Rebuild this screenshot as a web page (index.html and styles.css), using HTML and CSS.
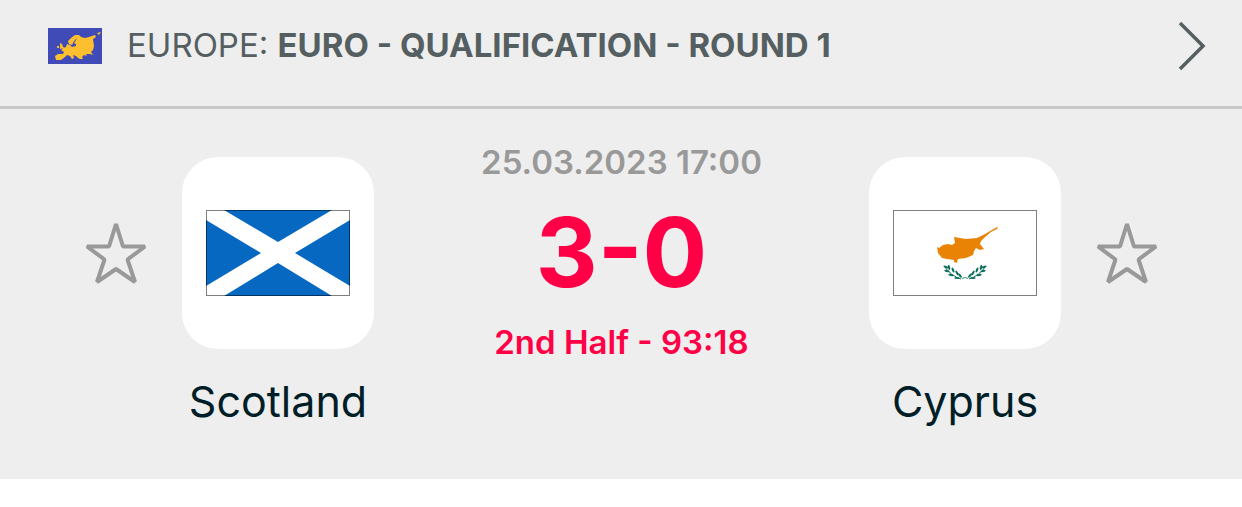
FILE: index.html
```html
<!DOCTYPE html>
<html lang="en">
<head>
<meta charset="utf-8">
<meta name="viewport" content="width=device-width, initial-scale=1">
<title>Scotland - Cyprus</title>
<link rel="stylesheet" href="styles.css">
</head>
<body>
<a class="league" href="#league">
  <svg class="league-flag" viewBox="0 0 54 36" aria-hidden="true">
    <rect width="54" height="36" fill="#414bb8"/>
    <path fill="#fdbf2d" d="M8 32 7 28 10 26 15 26 16 24 13 22 16 20 18 19 19 16 22 17 24 19 28 18 28 16 26 15 28 12 29 10 26 13 24 17 21 16 20 13 23 10 27 7 31 7 33 9 37 10 41 9 44 8 47 7 48 9 45 11 46 18 45 22 43 24 45 27 42 26 38 26 39 28 36 27 34 29 35 31 32 31 30 30 28 28 25 27 26 30 24 31 22 28 19 27 17 29 13 32ZM12 15 14 16 15 19 17 20 12 21ZM9 18 11 18 11 20 9 20ZM49 5 53 4 51 7Z"/>
  </svg>
  <span class="league-name">EUROPE: <b>EURO - QUALIFICATION - ROUND 1</b></span>
  <svg class="chevron" viewBox="0 0 28 50" aria-hidden="true">
    <path d="M2 2 25 25 2 48" fill="none" stroke="#555e61" stroke-width="3.500"/>
  </svg>
</a>
<main class="match">
  <button class="star" type="button" aria-label="Follow Scotland">
    <svg viewBox="0 0 64 64"><path d="M32 3 39 25.500H61L43.500 38.500 51 61 32 48 13 61 20.500 38.500 3 25.500H25Z"/></svg>
  </button>
  <section class="team">
    <div class="crest">
      <svg class="flag" viewBox="0 0 144 86" role="img" aria-label="Flag of Scotland">
        <rect width="144" height="86" fill="#0768c2"/>
        <path d="M0 0H18L72 32 126 0H144V10L89 43 144 76V86H126L72 53 18 86H0V76L55 43 0 10Z" fill="#fff"/>
        <rect x=".5" y=".5" width="143" height="85" fill="none" stroke="#000" stroke-opacity=".5"/>
      </svg>
    </div>
    <h2 class="team-name">Scotland</h2>
  </section>
  <section class="result">
    <time class="date" datetime="2023-03-25T17:00">25.03.2023 17:00</time>
    <div class="score">3-0</div>
    <div class="status">2nd Half - 93:18</div>
  </section>
  <section class="team">
    <div class="crest">
      <svg class="flag" viewBox="0 0 144 86" role="img" aria-label="Flag of Cyprus">
        <rect x=".5" y=".5" width="143" height="85" fill="#fff" stroke="#000" stroke-opacity=".5"/>
        <path fill="#e98306" d="M105 16.500 104 19 98 22 91 28 88 31 87 34 91 39 87 40 83 38 81 41 80 45 73 48 65 49 64 53 61 52 61 50 54 49 49 48 45 43 44 37 46 38 50 35 55 34 59 35 62 33 61 27 73 29 84 28 92 24Z"/>
        <g fill="#0d6f5c">
          <g id="branch">
            <path d="M51 56q7 10 17 13" fill="none" stroke="#0d6f5c" stroke-width="1"/>
            <ellipse cx="53" cy="57" rx="2.700" ry="1.100" transform="rotate(20 53 57)"/>
            <ellipse cx="56" cy="57.500" rx="2.700" ry="1.100" transform="rotate(75 56 57.500)"/>
            <ellipse cx="54" cy="61" rx="2.700" ry="1.100" transform="rotate(12 54 61)"/>
            <ellipse cx="60" cy="60" rx="2.700" ry="1.100" transform="rotate(68 60 60)"/>
            <ellipse cx="58" cy="65" rx="2.700" ry="1.100" transform="rotate(8 58 65)"/>
            <ellipse cx="64" cy="63" rx="2.700" ry="1.100" transform="rotate(60 64 63)"/>
            <ellipse cx="64" cy="68" rx="2.700" ry="1.100"/>
            <ellipse cx="67" cy="65.500" rx="2.700" ry="1.100" transform="rotate(50 67 65.500)"/>
          </g>
          <use href="#branch" transform="matrix(-1 0 0 1 144 0)"/>
          <path d="M69 68.500q3-2 6 0" fill="none" stroke="#0d6f5c" stroke-width=".8"/>
        </g>
      </svg>
    </div>
    <h2 class="team-name">Cyprus</h2>
  </section>
  <button class="star" type="button" aria-label="Follow Cyprus">
    <svg viewBox="0 0 64 64"><path d="M32 3 39 25.500H61L43.500 38.500 51 61 32 48 13 61 20.500 38.500 3 25.500H25Z"/></svg>
  </button>
</main>
</body>
</html>
```
FILE: styles.css
```css
* {
  box-sizing: border-box;
}

body {
  margin: 0;
  background: #fff;
  font-family: Inter, "Liberation Sans", sans-serif;
}

.league {
  display: flex;
  align-items: center;
  padding: 20px 36px 34px 48px;
  border-bottom: 3px solid #c8c8c8;
  background: #eee;
  color: #555e61;
  text-decoration: none;
}

.league-flag {
  flex: none;
  width: 54px;
  height: 36px;
  margin-right: 25px;
}

.league-name {
  flex: 1;
  padding-bottom: 2px;
  font-size: 33px;
  line-height: 48px;
}

.league-name b {
  font-weight: 700;
}

.chevron {
  flex: none;
  width: 28px;
  height: 52px;
}

.match {
  display: grid;
  grid-template-columns: 64px 192px 1fr 192px 64px;
  column-gap: 34px;
  padding: 31px 83px 48px 84px;
  background: #eee;
}

.star {
  width: 64px;
  height: 64px;
  margin-top: 81px;
  padding: 0;
  border: 0;
  background: none;
}

.star svg {
  display: block;
  width: 64px;
  height: 64px;
  fill: none;
  stroke: #999;
  stroke-width: 4;
  stroke-linejoin: bevel;
}

.team {
  padding-top: 17px;
  text-align: center;
}

.crest {
  display: flex;
  align-items: center;
  justify-content: center;
  height: 192px;
  border-radius: 36px;
  background: #fff;
}

.flag {
  width: 144px;
  height: 86px;
}

.team-name {
  margin: 24px 0 0;
  padding-bottom: 2px;
  color: #001e28;
  font-size: 43px;
  font-weight: 400;
  line-height: 56px;
  white-space: nowrap;
}

.result {
  text-align: center;
  white-space: nowrap;
}

.date,
.status {
  display: block;
  font-size: 33px;
  font-weight: 600;
  line-height: 44px;
}

.date {
  color: #999;
}

.score {
  padding: 20px 0;
  color: #ff0046;
  font-size: 96px;
  font-weight: 700;
  line-height: 96px;
}

.status {
  color: #ff0046;
}
```
